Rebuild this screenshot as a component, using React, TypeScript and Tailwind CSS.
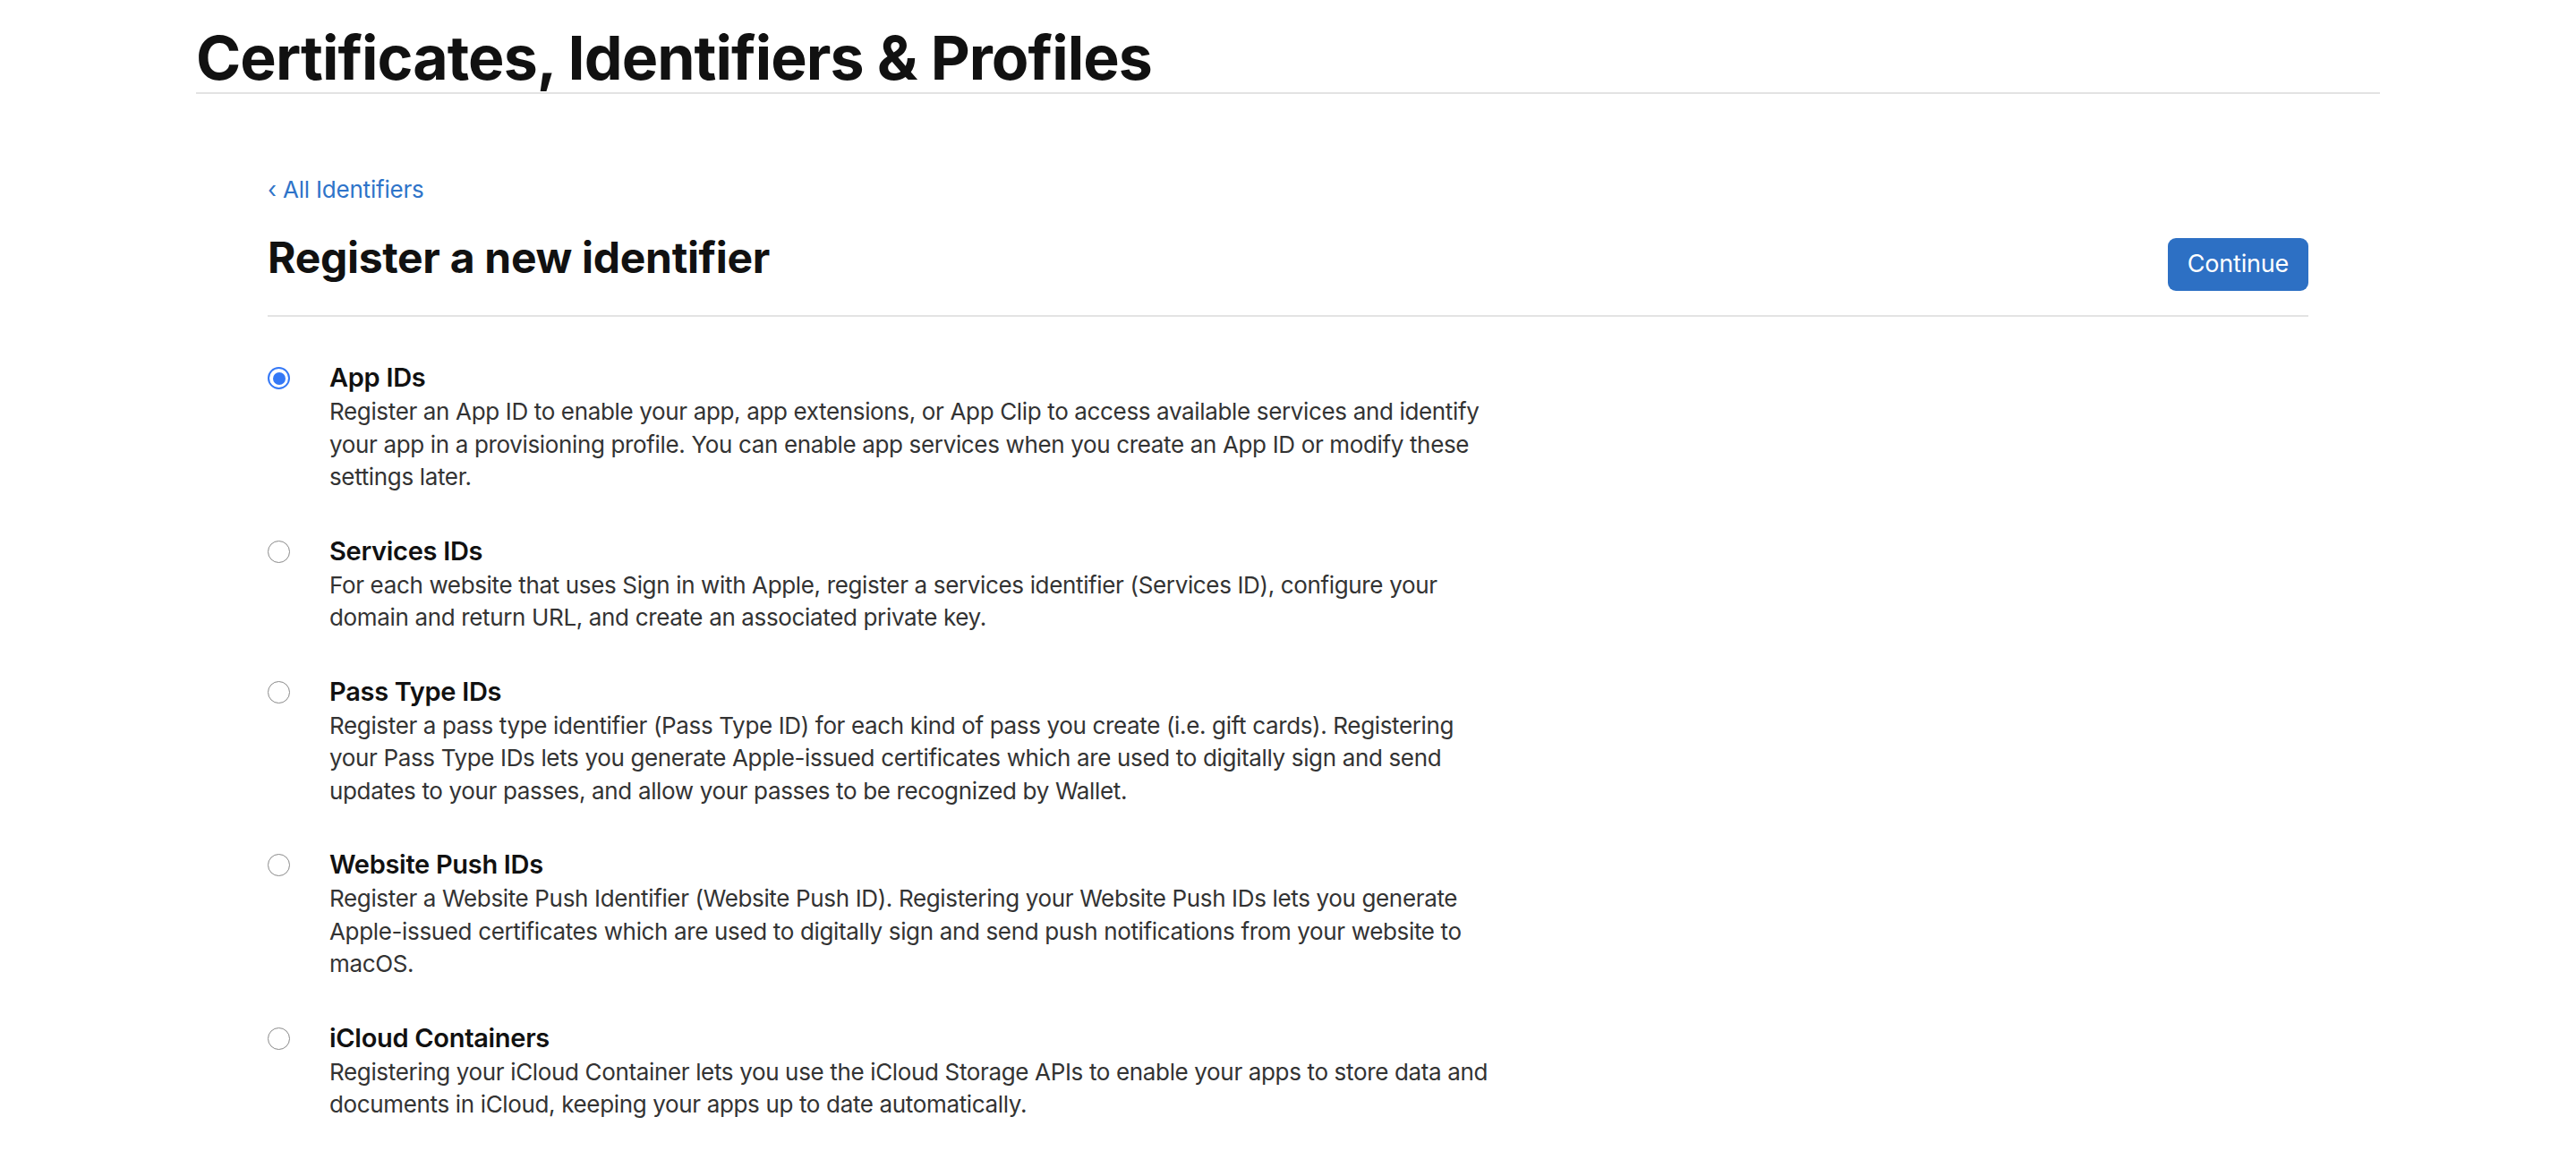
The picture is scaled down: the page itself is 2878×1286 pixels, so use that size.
import React, { useState } from 'react';

type IdentifierType = {
  id: string;
  title: string;
  description: string;
};

const identifierTypes: IdentifierType[] = [
  {
    id: 'app',
    title: 'App IDs',
    description:
      'Register an App ID to enable your app, app extensions, or App Clip to access available services and identify your app in a provisioning profile. You can enable app services when you create an App ID or modify these settings later.',
  },
  {
    id: 'services',
    title: 'Services IDs',
    description:
      'For each website that uses Sign in with Apple, register a services identifier (Services ID), configure your domain and return URL, and create an associated private key.',
  },
  {
    id: 'pass',
    title: 'Pass Type IDs',
    description:
      'Register a pass type identifier (Pass Type ID) for each kind of pass you create (i.e. gift cards). Registering your Pass Type IDs lets you generate Apple-issued certificates which are used to digitally sign and send updates to your passes, and allow your passes to be recognized by Wallet.',
  },
  {
    id: 'push',
    title: 'Website Push IDs',
    description:
      'Register a Website Push Identifier (Website Push ID). Registering your Website Push IDs lets you generate Apple-issued certificates which are used to digitally sign and send push notifications from your website to macOS.',
  },
  {
    id: 'icloud',
    title: 'iCloud Containers',
    description:
      'Registering your iCloud Container lets you use the iCloud Storage APIs to enable your apps to store data and documents in iCloud, keeping your apps up to date automatically.',
  },
];

function Radio({ checked }: { checked: boolean }) {
  return checked ? (
    <span className="flex h-[25px] w-[25px] items-center justify-center rounded-full border-[2.5px] border-[#3478f6] bg-white">
      <span className="h-[14px] w-[14px] rounded-full bg-[#3478f6]" />
    </span>
  ) : (
    <span className="block h-[25px] w-[25px] rounded-full border-[1.5px] border-[#8a8a8a] bg-white" />
  );
}

export default function App() {
  const [selected, setSelected] = useState('app');

  return (
    <div className="min-h-screen bg-white font-['Inter','Liberation_Sans',sans-serif] text-[#1d1d1f]">
      <div className="mx-auto w-[2440px]">
        <h1 className="border-b-2 border-[#e3e3e3] pt-[30px] pb-[5px] text-[68px] font-bold leading-[68px] tracking-[-0.95px] text-[#111]">
          Certificates, Identifiers &amp; Profiles
        </h1>

        <div className="px-[80px]">
          <div className="pt-[89px]">
            <a href="#" className="text-[26px] leading-[36px] tracking-[-0.2px] text-[#2f74c9]">
              ‹ All Identifiers
            </a>
          </div>

          <div className="flex items-center justify-between border-b-2 border-[#e3e3e3] pt-[20px] pb-[27px]">
            <h2 className="text-[48px] font-bold leading-[58px] tracking-[-0.3px] text-[#111]">
              Register a new identifier
            </h2>
            <button className="mt-[16px] h-[59px] w-[157px] rounded-[9px] bg-[#2d70c4] text-[27px] tracking-[-0.2px] text-white">
              Continue
            </button>
          </div>

          <div className="pt-[47px]">
            {identifierTypes.map((item) => (
              <label
                key={item.id}
                className="mb-[43px] flex cursor-pointer items-start gap-[44px]"
                onClick={() => setSelected(item.id)}
              >
                <span className="pt-[9px]">
                  <Radio checked={selected === item.id} />
                </span>
                <div className="max-w-[1300px]">
                  <div className="text-[29px] font-semibold leading-[41px] tracking-[-0.3px] text-[#111]">{item.title}</div>
                  <p className="text-[26px] leading-[36.5px] tracking-[-0.35px] text-[#333]">{item.description}</p>
                </div>
              </label>
            ))}
          </div>
        </div>
      </div>
    </div>
  );
}
